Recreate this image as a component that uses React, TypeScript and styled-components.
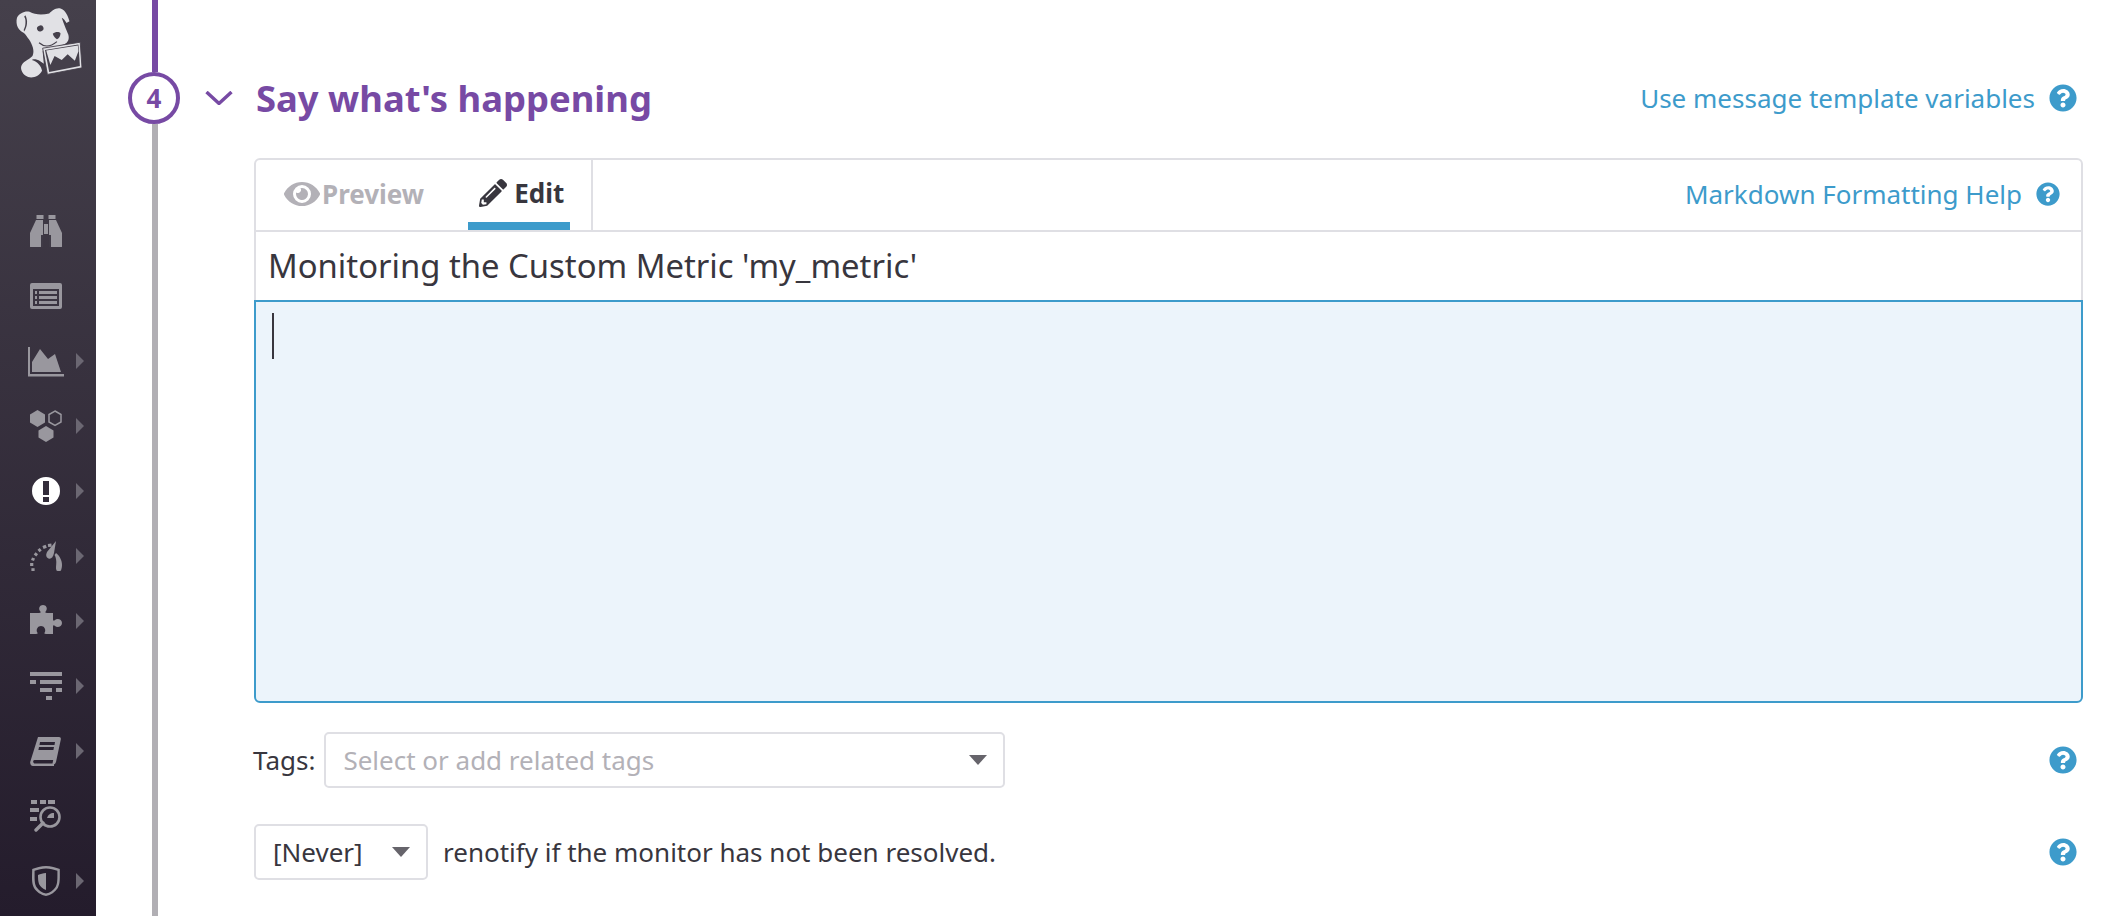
import React from "react";
import styled, { createGlobalStyle } from "styled-components";
import { FaEye, FaPencilAlt, FaQuestionCircle } from "react-icons/fa";

const Global = createGlobalStyle`
  html, body { margin: 0; padding: 0; background: #fff; }
  body { font-family: "Noto Sans", "Open Sans", sans-serif; color: #38363e; }
  * { box-sizing: border-box; }
`;

const Page = styled.div`
  display: flex;
  width: 2108px;
  height: 916px;
  overflow: hidden;
  background: #fff;
`;

const Sidebar = styled.nav`
  width: 96px;
  flex: none;
  display: flex;
  flex-direction: column;
  background: linear-gradient(180deg, #45404b 0%, #241c2c 100%);
`;

const LogoBox = styled.div`
  height: 198px;
  padding: 6px 0 0 14px;
  svg { display: block; }
`;

const NavRow = styled.div`
  height: 65px;
  display: flex;
  align-items: center;
  padding-left: 30px;
`;

const NavIcon = styled.svg<{ $active?: boolean }>`
  width: 32px;
  height: 32px;
  flex: none;
  display: block;
  fill: ${(p) => (p.$active ? "#fff" : "#99979e")};
`;

const NavArrow = styled.span`
  width: 0;
  height: 0;
  margin-left: 14px;
  border-left: 8px solid #6b6772;
  border-top: 8.5px solid transparent;
  border-bottom: 8.5px solid transparent;
`;

const Timeline = styled.div`
  width: 52px;
  flex: none;
  margin-left: 32px;
  display: flex;
  flex-direction: column;
  align-items: center;
`;

const Segment = styled.div<{ $done?: boolean }>`
  width: 6px;
  margin-left: 2px;
  height: ${(p) => (p.$done ? "72px" : "auto")};
  flex: ${(p) => (p.$done ? "none" : "1")};
  background: ${(p) => (p.$done ? "#774aa4" : "#b1afb4")};
`;

const StepCircle = styled.div`
  width: 52px;
  height: 52px;
  flex: none;
  border: 4px solid #774aa4;
  border-radius: 50%;
  display: flex;
  align-items: center;
  justify-content: center;
  font-size: 26px;
  font-weight: 700;
  color: #774aa4;
  line-height: 1;
`;

const Content = styled.main`
  flex: 1;
  min-width: 0;
  padding: 72px 31px 0 25px;
`;

const SectionHeader = styled.header`
  height: 52px;
  display: flex;
  align-items: center;
`;

const Chevron = styled.svg`
  width: 28px;
  height: 14px;
  flex: none;
  margin-right: 23px;
  fill: none;
  stroke: #774aa4;
  stroke-width: 3.4;
`;

const Heading = styled.h2`
  margin: 0;
  flex: 1;
  font-size: 36.4px;
  line-height: 52px;
  font-weight: 700;
  color: #774aa4;
`;

const HelpLink = styled.a`
  display: flex;
  align-items: center;
  gap: 14px;
  color: #3d9bcb;
  font-size: 26px;
  white-space: nowrap;
`;

const HelpIcon = styled(FaQuestionCircle)<{ $size: number }>`
  width: ${(p) => p.$size}px;
  height: ${(p) => p.$size}px;
  color: #3d9bcb;
  flex: none;
`;

const Form = styled.div`
  margin: 34px 0 0 49px;
  width: 1829px;
`;

const Editor = styled.section`
  border-radius: 6px;
`;

const TabBar = styled.div`
  height: 74px;
  display: flex;
  align-items: stretch;
  border: 2px solid #dfdfe4;
  border-radius: 6px 6px 0 0;
`;

const Tabs = styled.div`
  width: 337px;
  flex: none;
  display: flex;
  align-items: stretch;
  padding-left: 28px;
  border-right: 2px solid #dfdfe4;
`;

const Tab = styled.div<{ $active?: boolean }>`
  display: flex;
  align-items: center;
  height: 70px;
  gap: ${(p) => (p.$active ? "7px" : "2px")};
  padding: ${(p) => (p.$active ? "6px 6px 2px 11px" : "0 0 2px 0")};
  margin-left: ${(p) => (p.$active ? "44px" : "0")};
  font-size: 26px;
  font-weight: 700;
  color: ${(p) => (p.$active ? "#38363e" : "#b3b1b7")};
  border-bottom: ${(p) => (p.$active ? "8px solid #3d9bcb" : "none")};
`;

const TabBarRight = styled.div`
  flex: 1;
  display: flex;
  justify-content: flex-end;
  align-items: center;
  padding-right: 21px;
  padding-bottom: 2px;
`;

const TitleField = styled.div`
  height: 68px;
  display: flex;
  align-items: center;
  padding: 0 0 2px 12px;
  font-size: 32.8px;
  color: #38363e;
  border-left: 2px solid #dfdfe4;
  border-right: 2px solid #dfdfe4;
  white-space: nowrap;
`;

const MessageArea = styled.div`
  height: 403px;
  padding: 11px 16px;
  background: #ecf4fb;
  border: 2px solid #3d9bcb;
  border-radius: 0 0 6px 6px;
`;

const Caret = styled.span`
  display: block;
  width: 2px;
  height: 46px;
  background: #38363e;
`;

const FieldRow = styled.div<{ $top: number }>`
  display: flex;
  align-items: center;
  height: 56px;
  margin-top: ${(p) => p.$top}px;
  font-size: 26px;
  color: #38363e;
  white-space: nowrap;
`;

const FieldLabel = styled.span`
  margin-right: 9px;
  margin-left: -1px;
`;

const Select = styled.div<{ $width: number; $muted?: boolean }>`
  width: ${(p) => p.$width}px;
  height: 100%;
  flex: none;
  display: flex;
  align-items: center;
  justify-content: space-between;
  padding: 0 16px 0 17px;
  border: 2px solid #dfdfe4;
  border-radius: 5px;
  color: ${(p) => (p.$muted ? "#b3b1b7" : "#38363e")};
`;

const SelectArrow = styled.span`
  width: 0;
  height: 0;
  border-top: 10px solid #66646b;
  border-left: 9px solid transparent;
  border-right: 9px solid transparent;
`;

const RowText = styled.span`
  margin-left: 15px;
`;

const RowHelp = styled.span`
  margin-left: auto;
  margin-right: 6px;
  display: flex;
`;

const Logo = () => (
  <svg width="68" height="76" viewBox="0 0 228 252" aria-label="Datadog">
    <path
      fill="#e1e1e5"
      d="M10 38 C18 22 38 14 52 18 C70 28 92 30 118 24 C128 14 142 2 158 8 C172 12 182 34 186 50 L176 56 C170 46 166 40 160 38 C166 56 176 80 182 94 C186 108 182 120 170 126 L148 134 L118 138 L96 150 L100 192 L88 184 C76 176 62 176 60 180 C80 186 92 202 94 216 C84 236 56 246 38 232 C26 222 20 206 26 196 C32 184 50 178 62 166 C70 150 62 128 50 110 C40 96 38 92 32 88 C16 82 4 62 10 38 Z"
    />
    <path fill="#45404b" d="M38 30 C28 40 26 62 34 84 C44 70 48 48 38 30 Z" />
    <path fill="#e1e1e5" d="M22 36 C30 30 36 34 38 44 C40 60 36 76 30 80 C20 76 12 62 14 50 C16 42 18 38 22 36 Z" />
    <ellipse fill="#45404b" cx="88" cy="74" rx="11" ry="10" transform="rotate(-20 88 74)" />
    <path fill="#45404b" d="M130 92 C138 84 152 84 156 90 C156 100 150 108 144 110 C138 108 132 100 130 92 Z" />
    <path fill="none" stroke="#45404b" strokeWidth="4" d="M84 122 C100 136 122 136 144 118" />
    <path fill="#e1e1e5" stroke="#45404b" strokeWidth="3" d="M96 140 L222 120 L228 206 L112 228 Z" />
    <path fill="#45404b" d="M104 146 L216 128 L221 200 L118 220 Z" />
    <path fill="#e1e1e5" d="M108 148 L214 131 L216 150 L204 182 L180 160 L160 180 L136 166 L122 196 Z" />
  </svg>
);

const Binoculars = () => (
  <NavIcon viewBox="0 0 32 32">
    <rect x="6.5" y="0" width="7" height="4" />
    <rect x="18.5" y="0" width="7" height="4" />
    <path d="M6 5h7v27H.5a.5.5 0 0 1-.5-.5V18Z" />
    <path d="M19 5h7l6 13v13.500a.5.5 0 0 1-.5.500H19Z" />
    <rect x="13" y="9" width="6" height="10" />
    <rect x="11" y="20" width="2" height="12" fill="#3f3a46" />
    <rect x="19" y="20" width="2" height="12" fill="#3f3a46" />
    <rect x="13" y="9" width="1" height="10" fill="#3f3a46" />
    <rect x="18" y="9" width="1" height="10" fill="#3f3a46" />
  </NavIcon>
);

const ListIcon = () => (
  <NavIcon viewBox="0 0 32 32">
    <path fillRule="evenodd" d="M2 3h28a2 2 0 0 1 2 2v22a2 2 0 0 1-2 2H2a2 2 0 0 1-2-2V5a2 2 0 0 1 2-2Zm1 6v17h26V9Z" />
    <rect x="9" y="11" width="18" height="3" />
    <rect x="9" y="16" width="18" height="3" />
    <rect x="9" y="21" width="18" height="3" />
    <rect x="5" y="11" width="2" height="3" />
    <rect x="5" y="16" width="2" height="3" />
    <rect x="5" y="21" width="2" height="3" />
  </NavIcon>
);

const WideNavIcon = styled(NavIcon)`
  width: 36px;
  margin: 0 -2px;
`;

const AreaIcon = () => (
  <WideNavIcon viewBox="0 0 36 32">
    <path d="M0 2h2v27h34v2.500H0Z" />
    <path d="M4 27V17L12 4l8 10 7-5 6 18Z" />
  </WideNavIcon>
);

const HexIcon = () => (
  <NavIcon viewBox="0 0 32 32">
    <path d="M7.500 0 15 4.500v8L7.500 17 0 12.500v-8Z" />
    <path d="M16 16l7.500 4.500v7L16 32l-7.500-4.500v-7Z" />
    <path fill="none" stroke="#99979e" strokeWidth="1.500" d="M25 1l6 3.500v7.500l-6 3.500-6-3.500V4.500Z" />
  </NavIcon>
);

const AlertIcon = () => (
  <NavIcon $active viewBox="0 0 32 32">
    <path
      fillRule="evenodd"
      d="M16 2a14 14 0 1 1 0 28 14 14 0 0 1 0-28Zm-3 4v14h6V6Zm0 16v5h6v-5Z"
    />
  </NavIcon>
);

const GaugeIcon = () => (
  <NavIcon viewBox="0 0 32 32">
    <path d="M26 1 24 13c-.7 4-3 6.500-5.500 5.500-2.500-1-3-3.500-1.500-6.500Z" />
    <path d="M26 13c4 3 6 8 6 12 0 2-.5 4-1 5.500-1 .8-3.500.8-4.500 0-1-2-.2-5-.2-8.500 0-3-1-6-1.800-7Z" />
    <g fill="none" stroke="#99979e" strokeWidth="3.200">
      <path d="M3 31v-2.800" />
      <path d="M1.700 26v-3" />
      <path d="M2.500 20.500l1-2.500" />
      <path d="M5 15.500l1.800-2.200" />
      <path d="M8.500 11l2.200-1.800" />
      <path d="M13 7.500l3.200-1.300" />
      <path d="M18 5.500l3.500-.4" />
    </g>
  </NavIcon>
);

const PuzzleIcon = () => (
  <NavIcon viewBox="0 0 32 32">
    <path
      fillRule="evenodd"
      d="M0 8h9c2 0 2-1 1-2-2-3 0-6 3-6s5 3 3 6c-1 1-1 2 1 2h6v6c0 2 1 2 2 1 2-2 7-1 7 3s-5 5-7 3c-1-1-2-1-2 1v7h-7c-2 0-2-1-1-2 1-3-1-6-4-6s-5 3-4 6c1 1 1 2-1 2H0Z"
    />
  </NavIcon>
);

const FilterIcon = () => (
  <NavIcon viewBox="0 0 32 32">
    <rect x="0" y="2" width="32" height="4" />
    <rect x="0" y="10" width="6" height="4" />
    <rect x="10" y="10" width="22" height="4" />
    <rect x="10" y="18" width="12" height="4" />
    <rect x="26" y="18" width="6" height="4" />
    <rect x="16" y="26" width="6" height="4" />
  </NavIcon>
);

const BookIcon = () => (
  <NavIcon viewBox="0 0 32 32">
    <path
      fillRule="evenodd"
      d="M8 2h21c1.500 0 2 1 1.800 2.500L26 27c-.3 1-1 2-2 2.400L24 31H3c-2 0-3-2-2.800-4Zm2 5-.5 3h15l.5-3Zm-1 5-.6 3h15l.6-3ZM4.500 25c-1 0-1.500 1-1.300 2 .2.800.8 1.500 1.800 1.500h17.500l.7-3.500Z"
    />
  </NavIcon>
);

const SearchListIcon = () => (
  <NavIcon viewBox="0 0 32 32">
    <rect x="1" y="0" width="6" height="4" />
    <rect x="10" y="0" width="6" height="4" />
    <rect x="18" y="0" width="7" height="4" />
    <rect x="0" y="8" width="9" height="4" />
    <rect x="0" y="17" width="7" height="4" />
    <circle cx="20" cy="17" r="9.500" fill="none" stroke="#99979e" strokeWidth="2.600" />
    <path d="M17 18c1-3 3-5 7-5v5Z" />
    <path d="M6 30l7-7" fill="none" stroke="#99979e" strokeWidth="3.400" strokeLinecap="round" />
  </NavIcon>
);

const ShieldIcon = () => (
  <NavIcon viewBox="0 0 32 32">
    <path
      fillRule="evenodd"
      d="M16 1c5 0 10 1.500 13.800 3 0 9 .5 14-2 19-2.500 4-7 7-11.800 8C11 30 6.500 27 4 23 1.500 18 2 13 2.200 4 6 2.500 11 1 16 1Zm0 2.400C12 3.400 8 4.500 4.600 5.700c0 7.500-.3 12.500 1.800 16.200C8.500 25 12 27.700 16 28.500c4-.8 7.500-3.500 9.600-6.600 2.100-3.700 1.800-8.700 1.800-16.200C24 4.500 20 3.400 16 3.400Z"
    />
    <path d="M16 8v17c-3-1-6-3.500-7-6-1-3-1-6-1-9 2.500-1 5-2 8-2Z" />
  </NavIcon>
);

const navItems: { icon: React.ReactNode; arrow: boolean }[] = [
  { icon: <Binoculars />, arrow: false },
  { icon: <ListIcon />, arrow: false },
  { icon: <AreaIcon />, arrow: true },
  { icon: <HexIcon />, arrow: true },
  { icon: <AlertIcon />, arrow: true },
  { icon: <GaugeIcon />, arrow: true },
  { icon: <PuzzleIcon />, arrow: true },
  { icon: <FilterIcon />, arrow: true },
  { icon: <BookIcon />, arrow: true },
  { icon: <SearchListIcon />, arrow: false },
  { icon: <ShieldIcon />, arrow: true },
];

export default function App() {
  return (
    <Page>
      <Global />
      <Sidebar>
        <LogoBox>
          <Logo />
        </LogoBox>
        {navItems.map((item, i) => (
          <NavRow key={i}>
            {item.icon}
            {item.arrow && <NavArrow />}
          </NavRow>
        ))}
      </Sidebar>
      <Timeline>
        <Segment $done />
        <StepCircle>4</StepCircle>
        <Segment />
      </Timeline>
      <Content>
        <SectionHeader>
          <Chevron viewBox="0 0 28 14">
            <path d="M1.500 1 14 12.500 26.500 1" />
          </Chevron>
          <Heading>Say what's happening</Heading>
          <HelpLink>
            Use message template variables
            <HelpIcon $size={28} />
          </HelpLink>
        </SectionHeader>
        <Form>
          <Editor>
            <TabBar>
              <Tabs>
                <Tab>
                  <FaEye size={36} />
                  Preview
                </Tab>
                <Tab $active>
                  <FaPencilAlt size={28} />
                  Edit
                </Tab>
              </Tabs>
              <TabBarRight>
                <HelpLink>
                  Markdown Formatting Help
                  <HelpIcon $size={24} />
                </HelpLink>
              </TabBarRight>
            </TabBar>
            <TitleField>Monitoring the Custom Metric 'my_metric'</TitleField>
            <MessageArea>
              <Caret />
            </MessageArea>
          </Editor>
          <FieldRow $top={29}>
            <FieldLabel>Tags:</FieldLabel>
            <Select $width={681} $muted>
              Select or add related tags
              <SelectArrow />
            </Select>
            <RowHelp>
              <HelpIcon $size={28} />
            </RowHelp>
          </FieldRow>
          <FieldRow $top={36}>
            <Select $width={174}>
              [Never]
              <SelectArrow />
            </Select>
            <RowText>renotify if the monitor has not been resolved.</RowText>
            <RowHelp>
              <HelpIcon $size={28} />
            </RowHelp>
          </FieldRow>
        </Form>
      </Content>
    </Page>
  );
}
